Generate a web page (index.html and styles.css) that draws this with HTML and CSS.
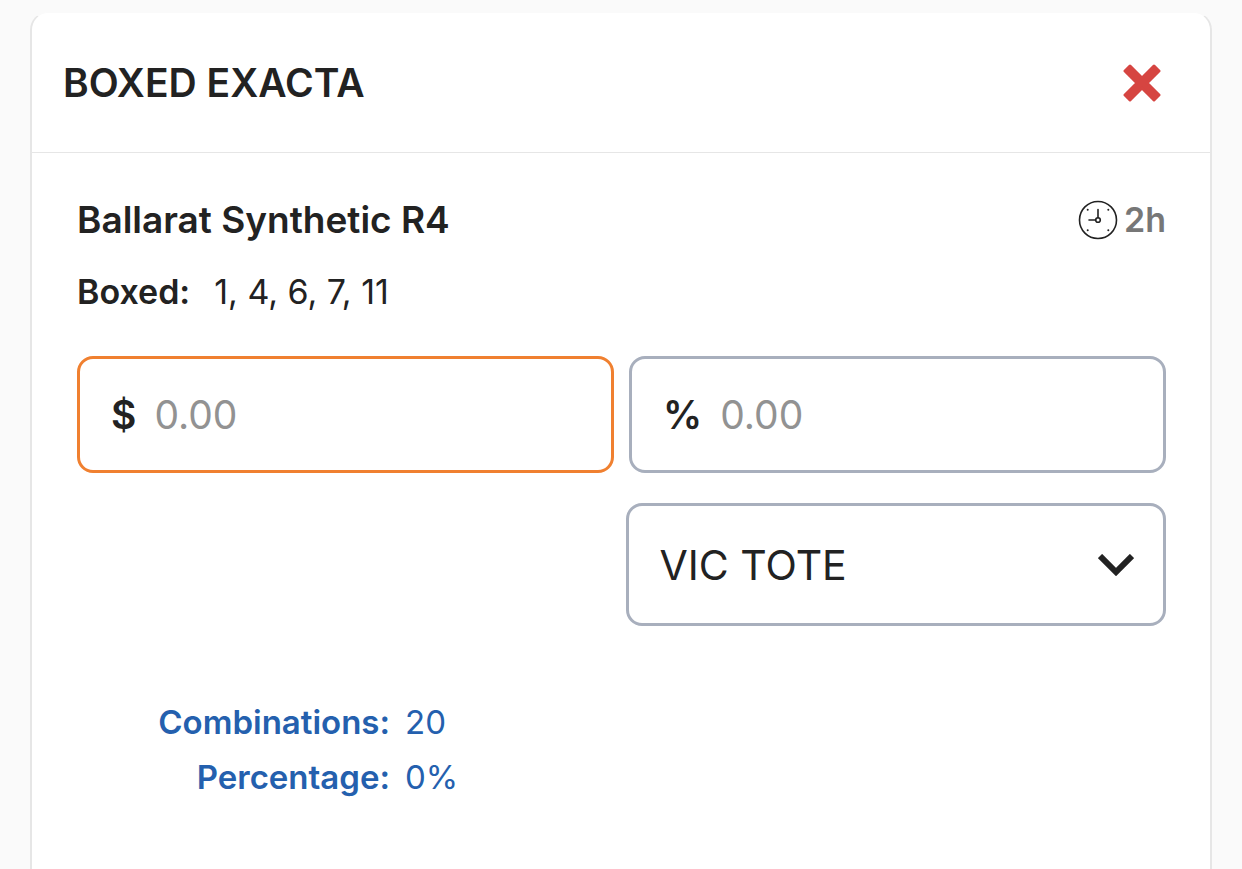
FILE: index.html
```html
<!DOCTYPE html>
<html lang="en">

<head>
  <meta charset="UTF-8" />
  <title>Boxed Exacta</title>
  <meta name="viewport" content="width=device-width, initial-scale=1.0" />
  <link rel="stylesheet" href="styles.css">
</head>

<body>
  <main class="card">
    <header class="card-header">
      <h1 class="title">BOXED EXACTA</h1>
      <button class="close" type="button" aria-label="Close">
        <svg viewBox="0 0 38 38" width="38" height="38">
          <path d="M7 2L19 14L31 2L36 7L24 19L36 31L31 36L19 24L7 36L2 31L14 19L2 7Z" />
        </svg>
      </button>
    </header>
    <form class="content">
      <div class="race">
        <h2 class="race-name">Ballarat Synthetic R4</h2>
        <div class="countdown">
          <svg viewBox="0 0 40 40" width="40" height="40">
            <circle cx="20" cy="20" r="18.5" />
            <circle cx="20" cy="20" r="2.3" />
            <path d="M20 17.5V9.5M17.5 20H11" />
            <path class="dots" d="M9.7 9.7h.01M30.3 9.7h.01M9.7 30.3h.01M30.3 30.3h.01" />
          </svg>
          <span>2h</span>
        </div>
      </div>
      <div class="runners">
        <strong>Boxed:</strong>
        <span>1, 4, 6, 7, 11</span>
      </div>
      <div class="stakes">
        <div class="field is-active">
          <label for="amount">$</label>
          <input type="text" id="amount" name="amount" placeholder="0.00" />
        </div>
        <div class="field">
          <label for="percent">%</label>
          <input type="text" id="percent" name="percent" placeholder="0.00" />
        </div>
      </div>
      <div class="tote">
        <select name="tote" aria-label="Tote">
          <option>VIC TOTE</option>
        </select>
        <svg class="chevron" viewBox="0 0 36 22" width="36" height="22">
          <path d="M2 2L18 18L34 2" />
        </svg>
      </div>
      <dl class="summary">
        <dt>Combinations:</dt>
        <dd>20</dd>
        <dt>Percentage:</dt>
        <dd>0%</dd>
      </dl>
    </form>
  </main>
</body>

</html>
```
FILE: styles.css
```css
:root {
  --color-text: #222;
  --color-muted: #777;
  --color-placeholder: #929292;
  --color-line: #e6e6e6;
  --color-field: #a8afbd;
  --color-active: #f08030;
  --color-danger: #d64541;
  --color-info: #2460ae;
}

* {
  box-sizing: border-box;
}

body {
  margin: 0;
  padding: 12px 30px 0;
  background-color: #fafafa;
  color: var(--color-text);
  font-family: Inter, "Liberation Sans", sans-serif;
  font-size: 34px;
  line-height: 40px;
}

.card {
  min-height: calc(100vh - 12px);
  background-color: #fff;
  border: 2px solid var(--color-line);
  border-top: 1px solid #fafafa;
  border-bottom: 0;
  border-radius: 18px 18px 0 0;
}

/* header */
.card-header {
  display: flex;
  align-items: center;
  justify-content: space-between;
  height: 140px;
  padding: 0 49px 0 31px;
  border-bottom: 1px solid var(--color-line);
}

.title {
  margin: 0;
  font-size: 39px;
  font-weight: 600;
}

.close {
  display: flex;
  padding: 0;
  background: none;
  border: 0;
  cursor: pointer;
}

.close path {
  fill: var(--color-danger);
  stroke: var(--color-danger);
  stroke-width: 3;
  stroke-linejoin: round;
}

svg {
  fill: none;
  stroke: var(--color-text);
}

/* race details */
.content {
  padding: 47px 44px 0 45px;
}

.race,
.countdown {
  display: flex;
  align-items: center;
  justify-content: space-between;
}

.race-name {
  margin: 0;
  font-size: 37px;
  font-weight: 600;
}

.countdown {
  gap: 6px;
  color: var(--color-muted);
  font-weight: 600;
}

.countdown svg {
  stroke-width: 1.6;
  stroke-linecap: round;
}

.countdown .dots {
  stroke-width: 2;
}

.runners {
  display: flex;
  gap: 24px;
  margin-top: 32px;
}

.runners strong {
  font-weight: 600;
}

/* fields */
.stakes {
  display: grid;
  grid-template-columns: repeat(2, minmax(0, 1fr));
  gap: 15px;
  margin-top: 44px;
}

.field {
  display: flex;
  align-items: center;
  gap: 18px;
  height: 117px;
  padding: 0 31px;
  border: 3px solid var(--color-field);
  border-radius: 16px;
}

.field.is-active {
  border-color: var(--color-active);
}

.field label {
  font-size: 39px;
  font-weight: 600;
}

.field input {
  flex: 1;
  min-width: 0;
  padding: 0;
  background: none;
  border: 0;
  outline: 0;
  color: var(--color-text);
  font: inherit;
  font-size: 39px;
}

.field input::placeholder {
  color: var(--color-placeholder);
}

.tote {
  position: relative;
  width: calc(50% - 4px);
  margin: 30px 0 0 auto;
}

.tote select {
  display: block;
  width: 100%;
  height: 123px;
  padding: 0 31px;
  appearance: none;
  background-color: #fff;
  border: 3px solid var(--color-field);
  border-radius: 16px;
  color: var(--color-text);
  font: inherit;
  font-size: 41px;
}

.chevron {
  position: absolute;
  top: 50%;
  right: 32px;
  margin-top: -11px;
  stroke-width: 6;
  pointer-events: none;
}

/* totals */
.summary {
  display: grid;
  grid-template-columns: 313px 1fr;
  gap: 15px;
  margin: 76px 0 0;
  color: var(--color-info);
  font-size: 33px;
}

.summary dt {
  font-weight: 600;
  text-align: right;
}

.summary dd {
  margin: 0;
}
```
